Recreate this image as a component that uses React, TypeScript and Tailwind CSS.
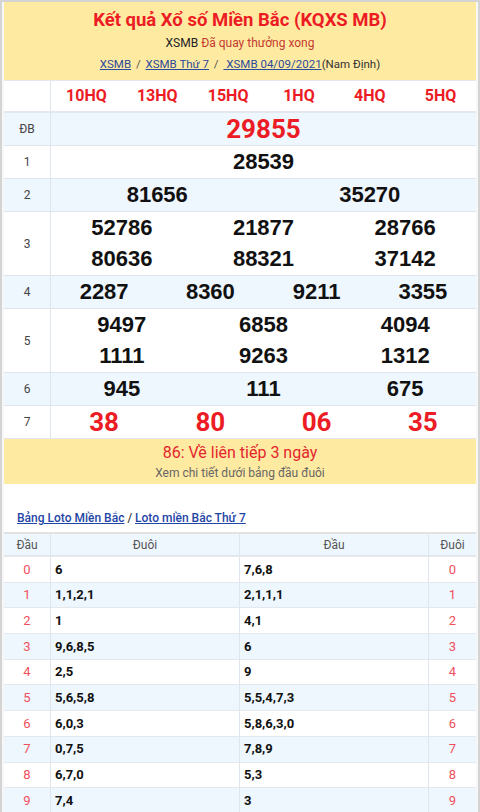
import React from 'react';

const RED = 'text-[#ec1c24]';

type Row = { label: string; nums: string[]; cols: number; kind?: 'db' | 'g7'; tall?: boolean };

const prizes: Row[] = [
  { label: 'ĐB', nums: ['29855'], cols: 1, kind: 'db' },
  { label: '1', nums: ['28539'], cols: 1 },
  { label: '2', nums: ['81656', '35270'], cols: 2 },
  { label: '3', nums: ['52786', '21877', '28766', '80636', '88321', '37142'], cols: 3, tall: true },
  { label: '4', nums: ['2287', '8360', '9211', '3355'], cols: 4 },
  { label: '5', nums: ['9497', '6858', '4094', '1111', '9263', '1312'], cols: 3, tall: true },
  { label: '6', nums: ['945', '111', '675'], cols: 3 },
  { label: '7', nums: ['38', '80', '06', '35'], cols: 4, kind: 'g7' },
];

const gridCols: Record<number, string> = {
  1: 'grid-cols-1',
  2: 'grid-cols-2',
  3: 'grid-cols-3',
  4: 'grid-cols-4',
};

const loto: [string, string][] = [
  ['6', '7,6,8'],
  ['1,1,2,1', '2,1,1,1'],
  ['1', '4,1'],
  ['9,6,8,5', '6'],
  ['2,5', '9'],
  ['5,6,5,8', '5,5,4,7,3'],
  ['6,0,3', '5,8,6,3,0'],
  ['0,7,5', '7,8,9'],
  ['6,7,0', '5,3'],
  ['7,4', '3'],
];

const codes = ['10HQ', '13HQ', '15HQ', '1HQ', '4HQ', '5HQ'];

function PrizeRow({ row, index }: { row: Row; index: number }) {
  const bg = index % 2 === 0 ? 'bg-[#eef6fe]' : 'bg-white';
  const numCls =
    row.kind === 'db' || row.kind === 'g7'
      ? `font-['Roboto',sans-serif] font-bold text-[26px] ${RED}`
      : "font-['Liberation_Sans',Arial,sans-serif] font-bold text-[22px] text-[#111]";
  return (
    <div className={`flex border-b border-[#dfe5ec] ${bg}`}>
      <div className="w-[47px] shrink-0 border-r border-[#dfe5ec] flex items-center justify-center text-[12px] text-[#444]">
        {row.label}
      </div>
      <div
        className={`flex-1 grid ${gridCols[row.cols]} items-center ${
          row.tall ? 'h-[63px] py-[1px]' : 'h-[32px]'
        }`}
      >
        {row.nums.map((n, i) => (
          <div key={i} className={`text-center leading-[30px] ${numCls}`}>
            {n}
          </div>
        ))}
      </div>
    </div>
  );
}

export default function App() {
  return (
    <div className="w-[480px] h-[812px] overflow-hidden border-x-2 border-t-2 border-[#d4d4d4] bg-[#f7f7f7] px-[2px] font-['Roboto',sans-serif]">
      <div className="bg-white h-full">
        {/* header */}
        <div className="bg-[#ffeaa2] h-[78px] flex flex-col items-center pt-[6px]">
          <h1 className={`text-[18.5px] font-bold leading-[25px] ${RED}`}>
            Kết quả Xổ số Miền Bắc (KQXS MB)
          </h1>
          <div className="text-[12px] leading-[18px] mt-[1px]">
            <span className="text-[#222]">XSMB </span>
            <span className="text-[#c43a31]">Đã quay thưởng xong</span>
          </div>
          <div className="text-[11.5px] leading-[18px] mt-[3px] text-[#333] whitespace-pre">
            <a className="text-[#2b4a9c] underline" href="#">XSMB</a>
            <span className="text-[#555] mx-[2px]">{' / '}</span>
            <a className="text-[#2b4a9c] underline" href="#">XSMB Thứ 7</a>
            <span className="text-[#555] mx-[2px]">{' / '}</span>
            <a className="text-[#2b4a9c] underline" href="#">{' XSMB 04/09/2021'}</a>
            <span>(Nam Định)</span>
          </div>
        </div>

        {/* result table */}
        <div className="border-t border-[#e4e8ee]">
          <div className="flex border-b-2 border-[#e4e8ee] bg-white">
            <div className="w-[47px] shrink-0 border-r border-[#dfe5ec]" />
            <div className="flex-1 grid grid-cols-6 h-[30px] items-center">
              {codes.map((c) => (
                <div key={c} className={`text-center text-[16px] font-bold ${RED}`}>
                  {c}
                </div>
              ))}
            </div>
          </div>
          {prizes.map((r, i) => (
            <PrizeRow key={r.label} row={r} index={i} />
          ))}
        </div>

        {/* note */}
        <div className="bg-[#ffeaa2] h-[45px] flex flex-col items-center pt-[3px]">
          <div className="text-[16px] leading-[22px] text-[#e3262d]">86: Về liên tiếp 3 ngày</div>
          <div className="text-[12px] leading-[18px] text-[#666]">Xem chi tiết dưới bảng đầu đuôi</div>
        </div>

        {/* loto links */}
        <div className="pt-[24px] pb-[4px] pl-[13px] text-[12px] font-medium leading-[20px]">
          <a className="text-[#1f45a6] underline" href="#">Bảng Loto Miền Bắc</a>
          <span className="text-[#444]"> / </span>
          <a className="text-[#1f45a6] underline" href="#">Loto miền Bắc Thứ 7</a>
        </div>

        {/* loto table */}
        <div className="border-t-2 border-[#e2e2e2]">
          <div className="grid grid-cols-[47px_189px_189px_1fr] h-[23px] bg-[#eef6fe] border-b-2 border-[#e4e8ee] text-[12px] text-[#555] items-center">
            <div className="text-center border-r border-[#dfe5ec] h-full flex items-center justify-center">Đầu</div>
            <div className="text-center border-r border-[#dfe5ec] h-full flex items-center justify-center">Đuôi</div>
            <div className="text-center border-r border-[#dfe5ec] h-full flex items-center justify-center">Đầu</div>
            <div className="text-center h-full flex items-center justify-center">Đuôi</div>
          </div>
          {loto.map(([a, b], i) => (
            <div
              key={i}
              className={`grid grid-cols-[47px_189px_189px_1fr] h-[25.7px] border-b border-[#e4e8ee] items-center ${
                i % 2 === 1 ? 'bg-[#eef6fe]' : 'bg-white'
              }`}
            >
              <div className="text-center text-[13px] text-[#f0505c] border-r border-[#dfe5ec] h-full flex items-center justify-center">
                {i}
              </div>
              <div className="pl-[4px] text-[13px] font-bold text-[#111] border-r border-[#dfe5ec] h-full flex items-center">
                {a}
              </div>
              <div className="pl-[4px] text-[13px] font-bold text-[#111] border-r border-[#dfe5ec] h-full flex items-center">
                {b}
              </div>
              <div className="text-center text-[13px] text-[#f0505c] h-full flex items-center justify-center">
                {i}
              </div>
            </div>
          ))}
        </div>
      </div>
    </div>
  );
}
